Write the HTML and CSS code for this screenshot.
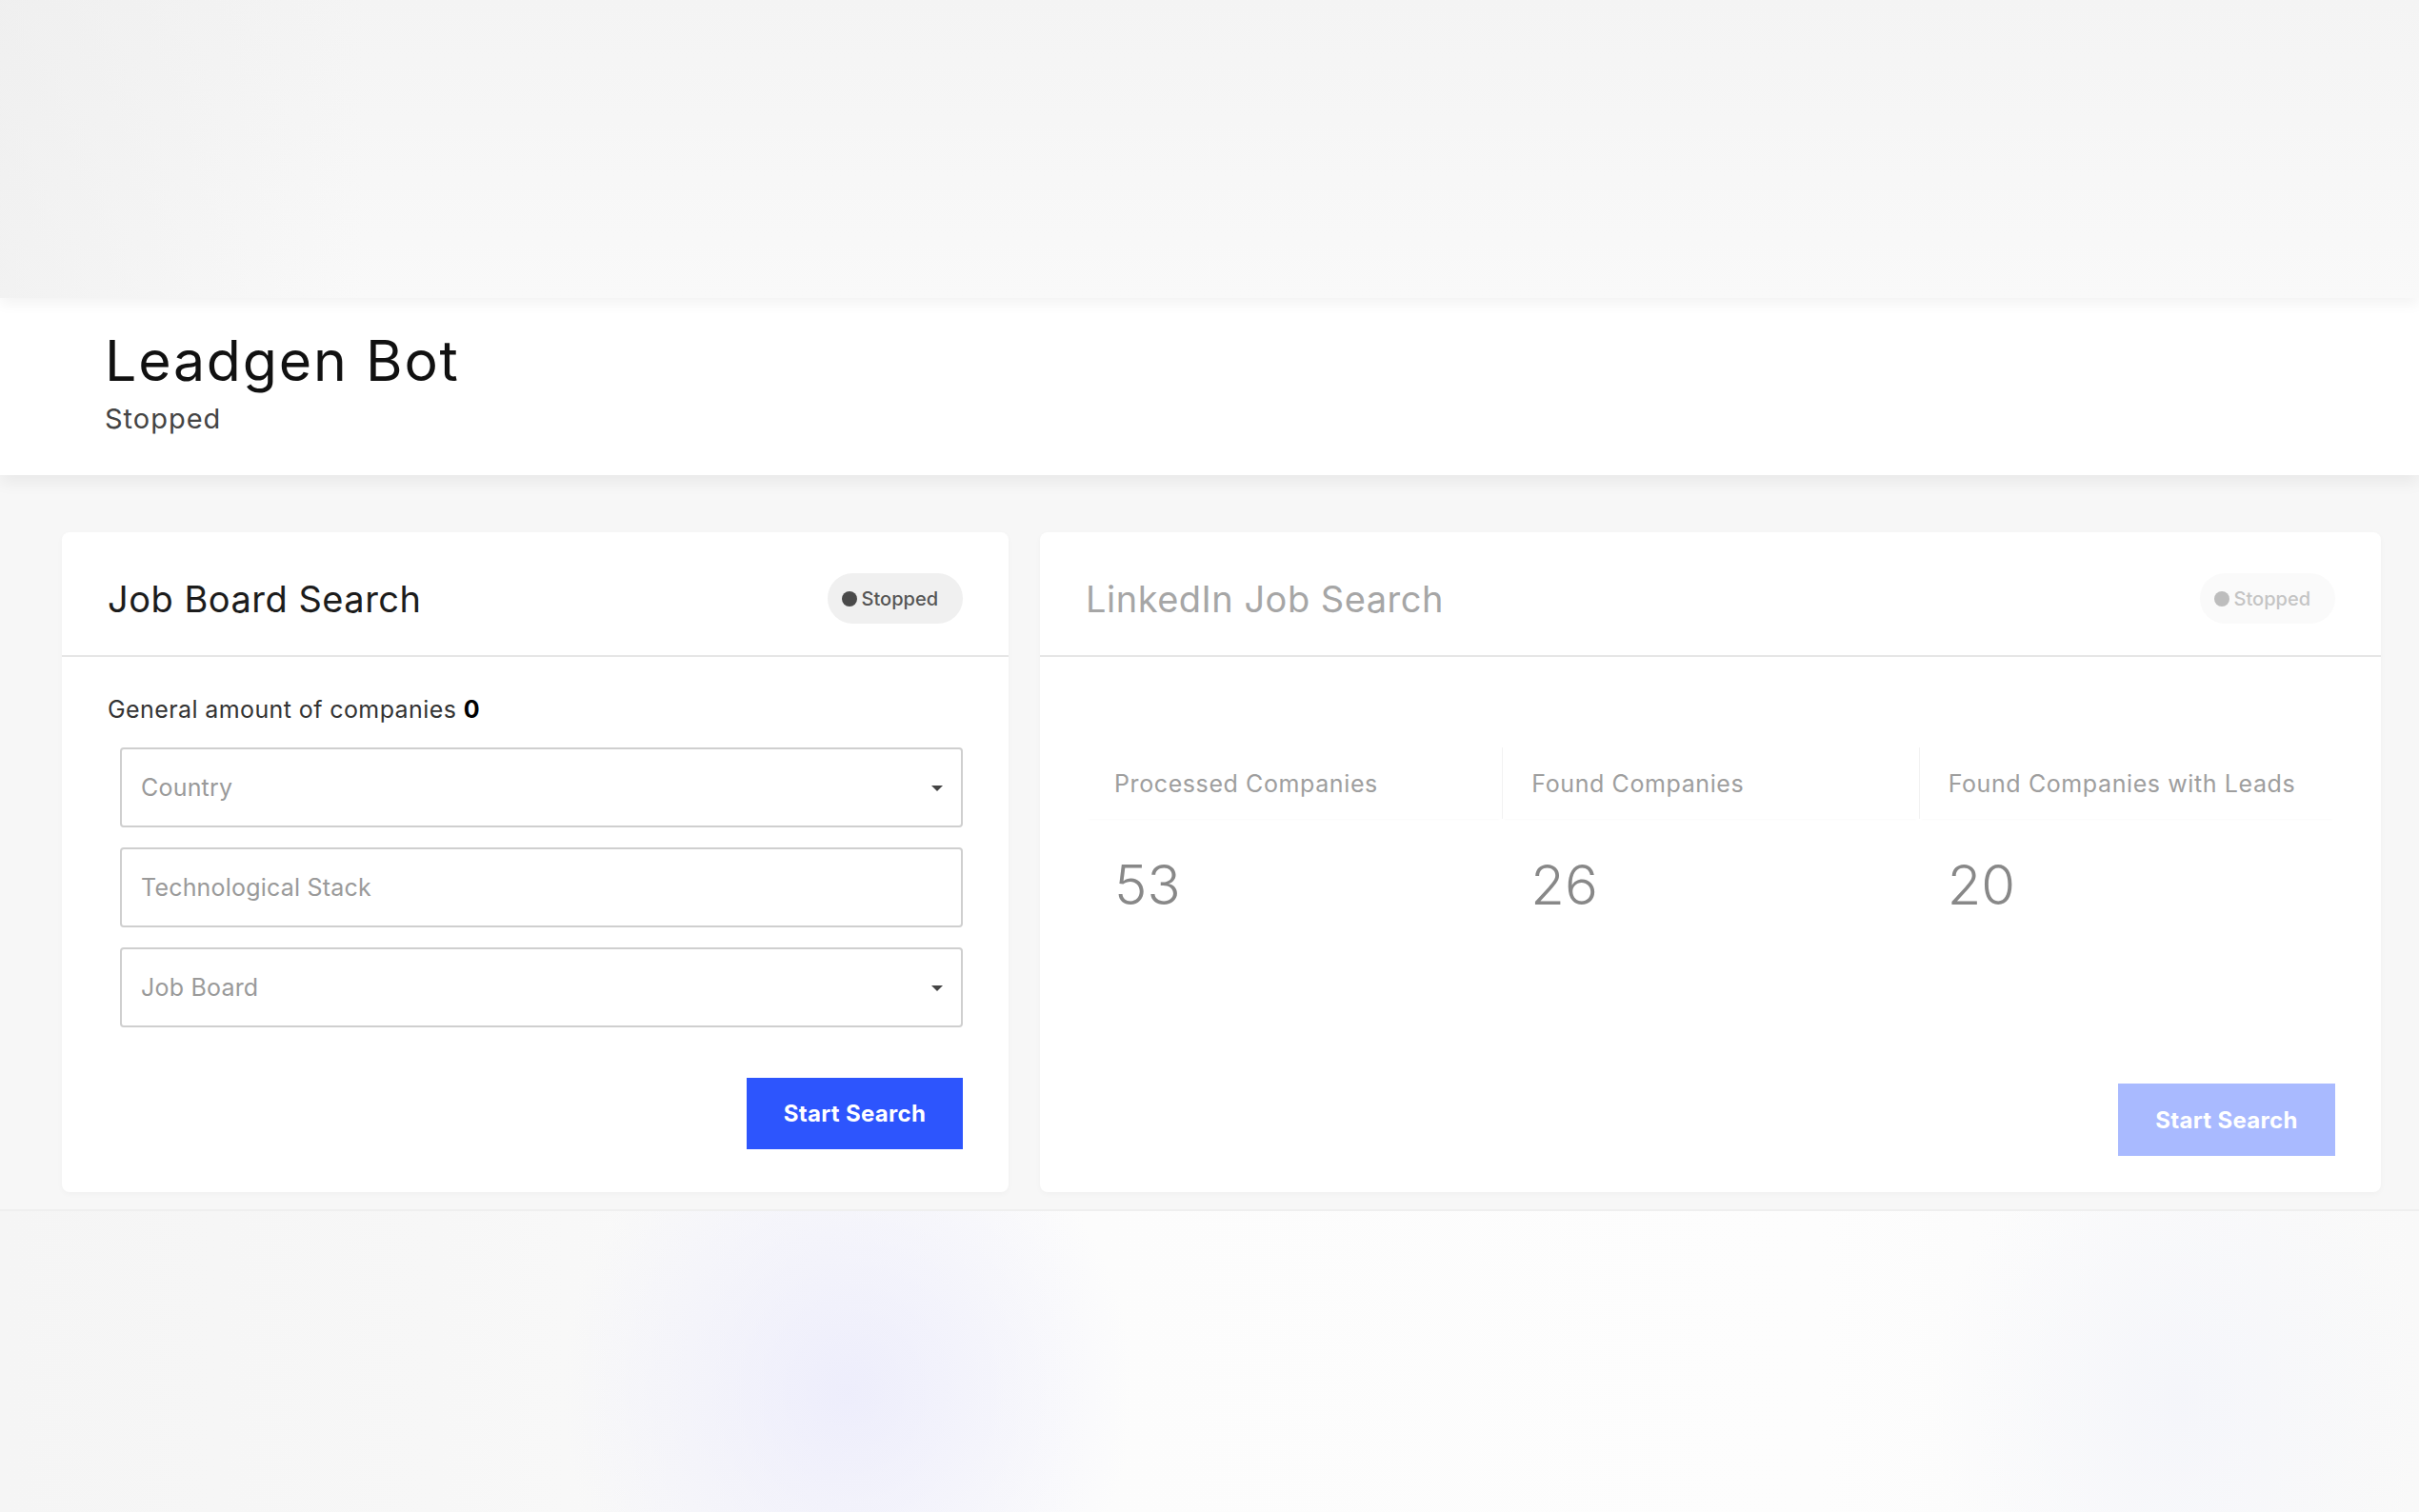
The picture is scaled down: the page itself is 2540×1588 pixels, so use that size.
FILE: index.html
```html
<!DOCTYPE html>
<html lang="en">
  <head>
    <meta charset="UTF-8" />
    <meta name="viewport" content="width=device-width, initial-scale=1.0" />
    <title>Leadgen Bot</title>
    <link rel="stylesheet" href="styles.css">
  </head>
  <body>
    <!-- top band -->
    <div class="top-band"></div>

    <!-- page header -->
    <header class="page-head">
      <h1 class="page-title">Leadgen Bot</h1>
      <p class="page-status">Stopped</p>
    </header>

    <!-- cards -->
    <main class="board">
      <!-- 1. job board -->
      <section class="card card-jobs">
        <div class="card-head">
          <h2 class="card-title">Job Board Search</h2>
          <span class="badge"><i class="dot"></i>Stopped</span>
        </div>
        <div class="card-body">
          <p class="total">General amount of companies <b>0</b></p>
          <form class="fields">
            <div class="select-wrap">
              <select class="field">
                <option>Country</option>
              </select>
            </div>
            <input class="field" type="text" placeholder="Technological Stack" />
            <div class="select-wrap">
              <select class="field">
                <option>Job Board</option>
              </select>
            </div>
          </form>
          <div class="actions">
            <button class="btn" type="button">Start Search</button>
          </div>
        </div>
      </section>

      <!-- 2. linkedin -->
      <section class="card card-linkedin">
        <div class="card-head is-off">
          <h2 class="card-title">LinkedIn Job Search</h2>
          <span class="badge"><i class="dot"></i>Stopped</span>
        </div>
        <div class="card-body">
          <div class="stats">
            <div class="stat">
              <div class="stat-label">Processed Companies</div>
              <div class="stat-num">53</div>
            </div>
            <div class="stat">
              <div class="stat-label">Found Companies</div>
              <div class="stat-num">26</div>
            </div>
            <div class="stat">
              <div class="stat-label">Found Companies with Leads</div>
              <div class="stat-num">20</div>
            </div>
          </div>
          <div class="actions">
            <button class="btn is-off" type="button">Start Search</button>
          </div>
        </div>
      </section>
    </main>

    <!-- bottom band -->
    <div class="bottom-band"></div>
  </body>
</html>
```

FILE: styles.css
```css
html,
body {
  margin: 0;
  padding: 0;
  overflow: hidden;
}
body {
  font-family: Inter, "Noto Sans", "Liberation Sans", sans-serif;
  color: #222;
  background: #f7f7f7;
  height: 1588px;
}
h1,
h2,
p {
  margin: 0;
  font-weight: 400;
}

/* top band */
.top-band {
  height: 313px;
  background:
    linear-gradient(to right, rgba(235, 235, 235, 0.5), rgba(255, 255, 255, 0) 15%),
    linear-gradient(to bottom, #f4f4f4, #f9f9f9);
  position: relative;
  z-index: 1;
  box-shadow: 0 6px 14px rgba(0, 0, 0, 0.05);
}

/* header */
.page-head {
  height: 186px;
  box-sizing: border-box;
  padding: 36px 110px 0;
  background: #fff;
  position: relative;
  box-shadow: 0 8px 16px rgba(0, 0, 0, 0.06);
}
.page-title {
  font-size: 59px;
  line-height: 1;
  color: #111;
  letter-spacing: 1.8px;
}
.page-status {
  margin-top: 14px;
  font-size: 29px;
  color: #444;
  letter-spacing: 1px;
}

/* board */
.board {
  display: flex;
  gap: 33px;
  padding: 60px 40px 18px 65px;
}
.card {
  background: #fff;
  border-radius: 8px;
  box-shadow: 0 2px 6px rgba(0, 0, 0, 0.03);
  height: 693px;
  display: flex;
  flex-direction: column;
}
.card-jobs {
  width: 994px;
}
.card-linkedin {
  flex: 1;
}
.card-head {
  height: 131px;
  box-sizing: border-box;
  padding: 10px 48px 0;
  border-bottom: 2px solid #e6e6e6;
  display: flex;
  align-items: center;
  justify-content: space-between;
}
.card-title {
  font-size: 38px;
  letter-spacing: 0.5px;
  color: #1c1c1c;
}
.badge {
  display: flex;
  align-items: center;
  gap: 5px;
  height: 53px;
  padding: 0 26px 0 15px;
  border-radius: 27px;
  background: #f0f0f0;
  font-size: 20px;
  font-weight: 500;
  color: #555;
}
.dot {
  width: 16px;
  height: 16px;
  border-radius: 50%;
  background: #4a4a4a;
}
.card-head.is-off .card-title {
  color: #a6a6a6;
}
.card-head.is-off .badge {
  background: #fafafa;
  color: #c4c4c4;
}
.card-head.is-off .dot {
  background: #bdbdbd;
}

.card-body {
  flex: 1;
  display: flex;
  flex-direction: column;
  padding: 40px 48px 45px;
}
.total {
  font-size: 25px;
  color: #333;
  letter-spacing: 0.4px;
}
.total b {
  color: #000;
  font-weight: 700;
}

/* form */
.fields {
  margin: 25px 0 0 13px;
  display: flex;
  flex-direction: column;
  gap: 21px;
}
.field {
  display: block;
  width: 100%;
  height: 84px;
  box-sizing: border-box;
  border: 2px solid #cfcfcf;
  border-radius: 4px;
  background: #fff;
  padding: 0 20px;
  font-family: inherit;
  font-size: 25px;
  color: #9a9a9a;
  letter-spacing: 0.2px;
  appearance: none;
  outline: none;
}
.field::placeholder {
  color: #9a9a9a;
}
.select-wrap {
  position: relative;
}
/* caret */
.select-wrap::after {
  content: "";
  position: absolute;
  right: 21px;
  top: 40px;
  border-left: 6px solid transparent;
  border-right: 6px solid transparent;
  border-top: 6px solid #444;
}

.actions {
  margin-top: auto;
  display: flex;
  justify-content: flex-end;
}
.btn {
  width: 227px;
  height: 75px;
  border: 0;
  background: #2d55fd;
  color: #fff;
  font-family: inherit;
  font-size: 24px;
  font-weight: 700;
  letter-spacing: 0.3px;
}
.btn.is-off {
  width: 228px;
  height: 76px;
  background: #a9baff;
}

/* linkedin stats */
.card-linkedin .card-body {
  padding: 95px 48px 38px;
}
.stats {
  display: flex;
}
.stat {
  flex: 1;
}
.stat-label {
  height: 75px;
  padding-left: 30px;
  display: flex;
  align-items: center;
  font-size: 25px;
  color: #9e9e9e;
  letter-spacing: 0.6px;
  box-shadow: 0 3px 3px -3px rgba(0, 0, 0, 0.04);
}
.stat + .stat .stat-label {
  border-left: 1px solid #f2f2f2;
}
.stat-num {
  margin-top: 34px;
  padding-left: 30px;
  font-size: 58px;
  font-weight: 300;
  color: #888;
}

/* bottom band */
.bottom-band {
  height: 318px;
  border-top: 2px solid #efefef;
  background:
    radial-gradient(ellipse 300px 320px at 890px 190px, rgba(236, 236, 252, 0.9), rgba(236, 236, 252, 0) 100%),
    radial-gradient(ellipse 260px 300px at 2290px 200px, rgba(244, 245, 250, 0.9), rgba(244, 245, 250, 0) 100%),
    linear-gradient(to right, #f5f5f5 0, #f7f7f7 18%, #fcfcfc 45%, #fdfdfd 75%, #f9f9f9 100%);
}
```
